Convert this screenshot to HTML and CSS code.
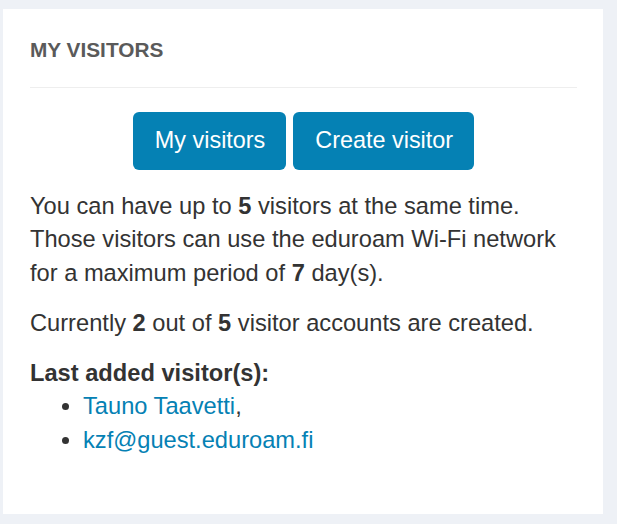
FILE: index.html
```html
<!DOCTYPE html>
<html lang="en">
<head>
    <meta charset="UTF-8">
    <meta name="viewport" content="width=device-width, initial-scale=1.0">
    <title>My visitors</title>
    <link rel="stylesheet" href="styles.css">
</head>
<body>
    <div class="panel">
        <h2 class="panel-title">MY VISITORS</h2>
        <div class="actions">
            <a class="btn" href="#">My visitors</a>
            <a class="btn" href="#">Create visitor</a>
        </div>
        <p>You can have up to <b>5</b> visitors at the same time. Those visitors can use the eduroam Wi-Fi network for a maximum period of <b>7</b> day(s).</p>
        <p>Currently <b>2</b> out of <b>5</b> visitor accounts are created.</p>
        <div class="recent">
            <b>Last added visitor(s):</b>
            <ul>
                <li><a href="#">Tauno Taavetti</a>,</li>
                <li><a href="#">kzf@guest.eduroam.fi</a></li>
            </ul>
        </div>
    </div>
</body>
</html>
```

FILE: styles.css
```css
body {
    margin: 0;
    padding: 9px 14px 10px 3px;
    background-color: #eef1f6;
    font-family: "Liberation Sans", Arial, sans-serif;
    font-size: 23.66px;
    line-height: 33.3px;
    color: #333333;
}

.panel {
    background-color: #ffffff;
    padding: 28px 26px 57px 27px;
}

.panel-title {
    margin: 0;
    padding-bottom: 25px;
    border-bottom: 1px solid #eeeeee;
    font-size: 20.8px;
    line-height: 25px;
    font-weight: bold;
    color: #5a5a5a;
}

.actions {
    display: flex;
    justify-content: center;
    gap: 7px;
    margin: 24px 0 20px;
}

.btn {
    display: block;
    height: 58px;
    padding: 0 21px 0 22px;
    line-height: 56px;
    font-size: 23.4px;
    color: #ffffff;
    background-color: #0581b4;
    border-radius: 6px;
    text-decoration: none;
}

p {
    margin: 0 0 17px;
}

ul {
    margin: 0;
    padding-left: 53px;
}

a {
    color: #0581b4;
    text-decoration: none;
}
```
